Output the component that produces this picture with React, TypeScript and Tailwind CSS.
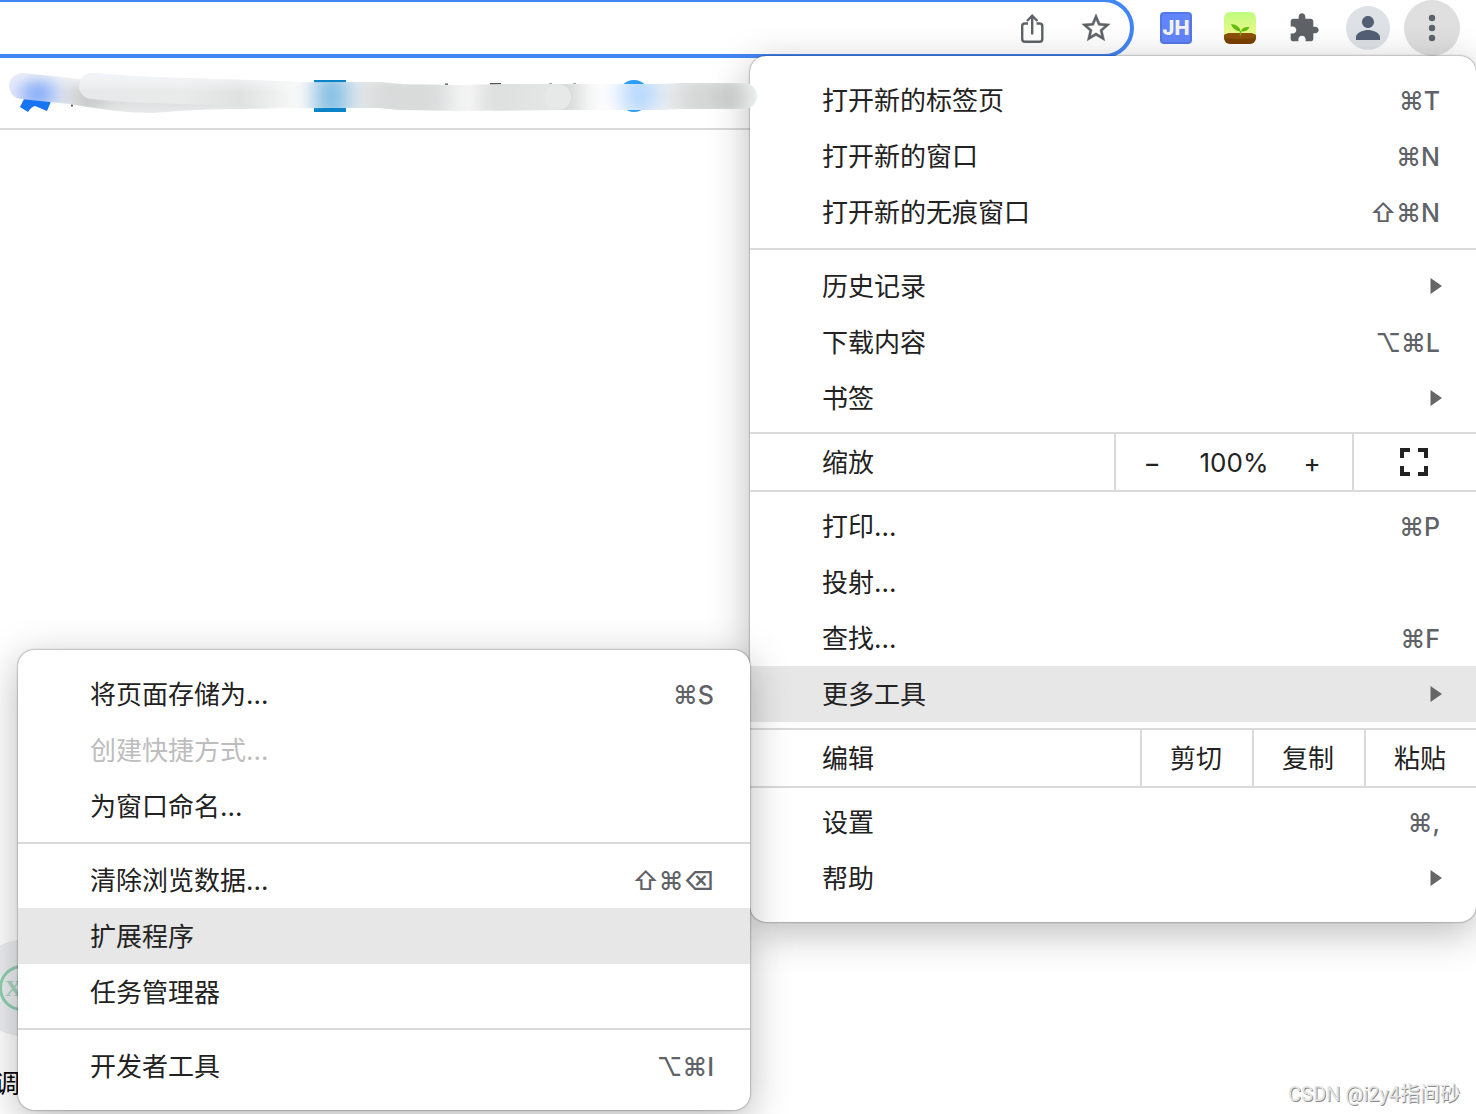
import type { ReactNode } from "react"
import clsx from "clsx"

type Item = {
  label: string
  shortcut?: string
  arrow?: boolean
  active?: boolean
  disabled?: boolean
}

const tabItems: Item[] = [
  { label: "打开新的标签页", shortcut: "⌘T" },
  { label: "打开新的窗口", shortcut: "⌘N" },
  { label: "打开新的无痕窗口", shortcut: "⇧⌘N" },
]

const historyItems: Item[] = [
  { label: "历史记录", arrow: true },
  { label: "下载内容", shortcut: "⌥⌘L" },
  { label: "书签", arrow: true },
]

const pageItems: Item[] = [
  { label: "打印...", shortcut: "⌘P" },
  { label: "投射..." },
  { label: "查找...", shortcut: "⌘F" },
]

const settingItems: Item[] = [
  { label: "设置", shortcut: "⌘," },
  { label: "帮助", arrow: true },
]

const toolGroups: Item[][] = [
  [
    { label: "将页面存储为...", shortcut: "⌘S" },
    { label: "创建快捷方式...", disabled: true },
    { label: "为窗口命名..." },
  ],
  [
    { label: "清除浏览数据...", shortcut: "⇧⌘⌫" },
    { label: "扩展程序", active: true },
    { label: "任务管理器" },
  ],
  [{ label: "开发者工具", shortcut: "⌥⌘I" }],
]

function MenuItem({ item }: { item: Item }) {
  return (
    <button
      role="menuitem"
      disabled={item.disabled}
      className={clsx(
        "flex h-14 w-full items-center justify-between pr-9 pl-[72px] text-left",
        item.active && "bg-[#e7e7e7]",
        item.disabled && "text-[#bdbdbd]",
      )}
    >
      <span className="pt-0.5">{item.label}</span>
      {item.shortcut && (
        <span className="pt-0.5 text-[25px] font-medium text-[#5f6368]">{item.shortcut}</span>
      )}
      {item.arrow && (
        <svg viewBox="0 0 12 16" className="-mr-0.5 h-4 w-3 fill-[#666]">
          <path d="M0.500 0L12 8L0.500 16Z" />
        </svg>
      )}
    </button>
  )
}

function Items({ items }: { items: Item[] }) {
  return items.map((item) => <MenuItem key={item.label} item={item} />)
}

function Separator() {
  return <hr className="my-2 border-t-2 border-[#dadada]" />
}

function MenuRow({ label, children }: { label: string; children: ReactNode }) {
  return (
    <div className="my-1.5 flex h-[60px] items-stretch border-y-2 border-[#dadada]">
      <span className="flex flex-1 items-center pt-0.5 pl-[72px]">{label}</span>
      {children}
    </div>
  )
}

function Panel({ className, children }: { className: string; children: ReactNode }) {
  return (
    <div
      role="menu"
      className={clsx(
        "absolute rounded-2xl bg-white py-4 shadow-[0_0_2px_rgba(0,0,0,0.6),0_10px_40px_rgba(0,0,0,0.28)]",
        className,
      )}
    >
      {children}
    </div>
  )
}

function MainMenu() {
  return (
    <Panel className="top-14 right-0 w-[726px]">
      <Items items={tabItems} />
      <Separator />
      <Items items={historyItems} />
      <MenuRow label="缩放">
        <div className="flex w-[238px] items-center justify-between border-l-2 border-[#dadada] pt-0.5 pr-7 pl-5">
          <button aria-label="缩小" className="w-8">−</button>
          <span>100%</span>
          <button aria-label="放大" className="w-6">+</button>
        </div>
        <button aria-label="全屏" className="flex w-[124px] items-center justify-center border-l-2 border-[#dadada] pr-0.5">
          <svg viewBox="0 0 28 28" className="h-7 w-7 fill-[#222]">
            <path d="M0 0h10v4H4v6H0zM18 0h10v10h-4V4h-6zM0 18h4v6h6v4H0zM24 18h4v10H18v-4h6z" />
          </svg>
        </button>
      </MenuRow>
      <Items items={pageItems} />
      <div className="relative">
        <MenuItem item={{ label: "更多工具", arrow: true, active: true }} />
        <ToolsMenu />
      </div>
      <MenuRow label="编辑">
        {["剪切", "复制", "粘贴"].map((label) => (
          <button key={label} className="w-28 border-l-2 border-[#dadada] pt-0.5 pr-0.5">
            {label}
          </button>
        ))}
      </MenuRow>
      <Items items={settingItems} />
    </Panel>
  )
}

function ToolsMenu() {
  return (
    <Panel className="-top-4 right-full w-[732px]">
      {toolGroups.map((group, i) => (
        <div key={i}>
          {i > 0 && <Separator />}
          <Items items={group} />
        </div>
      ))}
    </Panel>
  )
}

function Toolbar() {
  return (
    <header className="flex h-14 items-center pr-4">
      <div className="-my-0.5 -ml-8 flex h-[60px] flex-1 items-center gap-8 self-start rounded-full border-4 border-[#4285f4] pr-[17px] pl-8">
        <input aria-label="地址" className="h-10 min-w-0 flex-1 outline-none" />
        <button aria-label="分享">
          <svg viewBox="0 0 28 32" className="h-8 w-7 fill-none stroke-[#5f6368] stroke-[2.4]">
            <path d="M9 11.500H6Q3.200 11.500 3.200 14V27Q3.200 29.800 6 29.800H20.500Q23.300 29.800 23.300 27V14Q23.300 11.500 20.500 11.500H17.500M13.200 22.500V4M8 9L13.200 3.700L18.400 9" />
          </svg>
        </button>
        <button aria-label="收藏">
          <svg viewBox="0 0 24 24" className="h-[34px] w-[34px] fill-[#5f6368]">
            <path d="M22 9.240l-7.190-.62L12 2 9.190 8.630 2 9.240l5.460 4.730L5.820 21 12 17.270 18.180 21l-1.630-7.030L22 9.240zM12 15.400l-3.760 2.270 1-4.280-3.320-2.880 4.380-.38L12 6.100l1.710 4.040 4.380.38-3.320 2.880 1 4.280L12 15.400z" stroke="#5f6368" strokeWidth="0.300" />
          </svg>
        </button>
      </div>
      <button className="ml-[26px] h-8 w-8 rounded border-2 border-[#5577e8] bg-[#6385fb] text-center text-xl leading-7 font-extrabold text-[#f4f4ee]">
        <span className="-mx-1 block">JH</span>
      </button>
      <button aria-label="绿芽" className="ml-8">
        <svg viewBox="0 0 32 32" className="h-8 w-8">
          <defs>
            <linearGradient id="sky" x2="0" y2="1">
              <stop stopColor="#bdfb7c" />
              <stop offset="0.7" stopColor="#eef98c" />
            </linearGradient>
            <clipPath id="tile">
              <rect width="32" height="32" rx="6" />
            </clipPath>
          </defs>
          <g clipPath="url(#tile)">
            <rect width="32" height="32" fill="url(#sky)" />
            <path d="M0 23Q3 21 8 21H24Q29 21 32 23V32H0Z" fill="#7a4100" />
            <path d="M0 23Q3 21 8 21H24Q29 21 32 23V26Q16 28 0 26Z" fill="#8d500b" />
            <path d="M16.500 23.500V19" stroke="#62bd10" strokeWidth="1.400" />
            <path d="M16.500 19.500Q16 13 7 12Q9 18.500 16.500 19.500ZM17 19.500Q17.500 14.500 25.500 15Q23.500 20 17 19.500Z" fill="#62bd10" />
          </g>
        </svg>
      </button>
      <button aria-label="扩展程序" className="ml-8">
        <svg viewBox="0 0 24 24" className="h-8 w-8 fill-[#5f6368]">
          <path d="M20.500 11H19V7c0-1.100-.9-2-2-2h-4V3.500C13 2.120 11.880 1 10.500 1S8 2.120 8 3.500V5H4c-1.100 0-1.990.9-1.990 2v3.800H3.500c1.490 0 2.700 1.210 2.700 2.700s-1.210 2.700-2.700 2.700H2V20c0 1.100.9 2 2 2h3.800v-1.500c0-1.490 1.210-2.700 2.700-2.700 1.490 0 2.700 1.210 2.700 2.700V22H17c1.100 0 2-.9 2-2v-4h1.500c1.380 0 2.500-1.120 2.500-2.500S21.880 11 20.500 11z" />
        </svg>
      </button>
      <button aria-label="用户" className="ml-[26px] flex h-11 w-11 items-center justify-center rounded-full bg-[#dee1e6]">
        <svg viewBox="0 0 24 24" className="h-9 w-9 fill-[#535f75]">
          <path d="M12 12c2.210 0 4-1.790 4-4s-1.790-4-4-4-4 1.790-4 4 1.790 4 4 4zm0 1.300c-2.670 0-8 1.740-8 4.700v2h16v-2c0-2.960-5.330-4.700-8-4.700z" />
        </svg>
      </button>
      <button aria-label="更多" className="ml-3.5 flex h-14 w-14 items-center justify-center rounded-full bg-[#dfdfdf]">
        <svg viewBox="0 0 8 28" className="h-7 w-2 fill-[#5f6368]">
          <circle cx="4" cy="4" r="3.200" />
          <circle cx="4" cy="14" r="3.200" />
          <circle cx="4" cy="24" r="3.200" />
        </svg>
      </button>
    </header>
  )
}

// Bookmark icons with brush strokes smeared across them
function Smudge() {
  return (
    <svg viewBox="0 0 760 72" className="pointer-events-none absolute top-14 left-0 z-10 h-[72px] w-[760px] fill-none">
      <defs>
        <filter id="soft" filterUnits="userSpaceOnUse" x="-40" y="-40" width="840" height="160">
          <feGaussianBlur stdDeviation="12 7" />
        </filter>
        <mask id="long" maskUnits="userSpaceOnUse" x="0" y="0" width="760" height="72">
          <path d="M22 30L70 35Q120 44 152 44Q195 40 240 40L330 39L380 39L400 41L460 42L560 41L660 41L680 40H744" stroke="#fff" strokeWidth="26" strokeLinecap="round" strokeLinejoin="round" />
        </mask>
        <linearGradient id="front" gradientUnits="userSpaceOnUse" x1="78" x2="310" y1="0" y2="0">
          <stop stopColor="#e7e8e9" />
          <stop offset="0.450" stopColor="#e9eaea" />
          <stop offset="0.700" stopColor="#e0e1e1" />
          <stop offset="0.850" stopColor="#eeefef" />
          <stop offset="1" stopColor="#f8f8f8" stopOpacity="0" />
        </linearGradient>
        <linearGradient id="mid" gradientUnits="userSpaceOnUse" x1="470" x2="572" y1="0" y2="0">
          <stop stopColor="#e4e4e4" stopOpacity="0" />
          <stop offset="0.350" stopColor="#dfe0e0" />
          <stop offset="1" stopColor="#e7e8e8" />
        </linearGradient>
        <linearGradient id="shine" gradientUnits="userSpaceOnUse" x1="0" x2="0" y1="17" y2="36">
          <stop stopColor="#f4f5fa" stopOpacity="0.900" />
          <stop offset="1" stopColor="#fff" stopOpacity="0" />
        </linearGradient>
      </defs>
      <path d="M24 43H52L47 55Q40 52 35 50Q31 51 28 56L20 51Z" fill="#1874f4" />
      <rect x="314" y="24" width="32" height="32" fill="#0a84c7" />
      <circle cx="634" cy="40" r="16" fill="#2b9df7" />
      <path d="M445 28.500h3M490 28h11M549 28.500h3M573 28.500h3M71 49.500h2" stroke="#555" strokeWidth="2" />
      <g mask="url(#long)">
        <rect width="760" height="72" fill="#f3f4f5" />
        <g filter="url(#soft)">
          <rect x="-10" y="0" width="24" height="60" fill="#e9eefb" />
          <ellipse cx="37" cy="38" rx="17" ry="16" fill="#78a4fb" />
          <rect x="72" y="28" width="28" height="30" fill="#c2c4c4" />
          <rect x="100" y="24" width="172" height="32" fill="#dddfdf" />
          <rect x="276" y="0" width="28" height="72" fill="#fff" />
          <rect x="314" y="20" width="34" height="40" fill="#7dbce2" />
          <rect x="364" y="20" width="86" height="44" fill="#d9dbdb" />
          <rect x="455" y="0" width="26" height="72" fill="#f7f7f7" />
          <rect x="486" y="20" width="94" height="44" fill="#d4d6d6" />
          <rect x="588" y="0" width="30" height="72" fill="#fff" />
          <ellipse cx="639" cy="38" rx="18" ry="22" fill="#b2d7fe" />
          <rect x="675" y="22" width="50" height="40" fill="#d6d8d8" />
          <rect x="722" y="24" width="22" height="34" fill="#bcbfbe" />
        </g>
      </g>
      <path d="M92 30Q130 34 180 35L310 39" stroke="url(#front)" strokeWidth="26" />
      <circle cx="92" cy="30" r="13" fill="#e7e8e9" />
      <path d="M92 30Q130 34 180 35L280 38" stroke="url(#shine)" strokeWidth="26" strokeLinecap="round" />
      <path d="M470 41H558" stroke="url(#mid)" strokeWidth="26" />
      <circle cx="558" cy="41" r="13" fill="#e7e8e8" />
    </svg>
  )
}

export default function App() {
  return (
    <div className="relative min-h-screen overflow-hidden bg-white font-[Inter,'Noto_Sans_CJK_SC',sans-serif] text-[26px] leading-8 text-[#222]">
      <Toolbar />
      <div className="h-[74px] border-b-2 border-[#dadada]" />
      <main className="pt-[810px]">
        <a href="#" className="flex w-24 flex-col text-black">
          <span className="-ml-[26px] flex h-24 w-24 items-center justify-center rounded-full bg-[#eceef1]">
            <span className="h-[46px] w-[46px] rounded-full border-[3px] border-[#8fd0b0] text-center font-['Liberation_Serif',serif] text-2xl leading-10 font-bold text-[#a3d6be]">
              XX
            </span>
          </span>
          <span className="mt-8 -ml-1.5">调</span>
        </a>
      </main>
      <MainMenu />
      <Smudge />
      <p className="absolute right-4 bottom-2 font-[Roboto,'Noto_Sans_CJK_SC',sans-serif] text-xl leading-6 text-[#e4e4e4] [text-shadow:1px_1px_0_#8c8c8c]">
        CSDN @i2y4指间砂
      </p>
    </div>
  )
}
